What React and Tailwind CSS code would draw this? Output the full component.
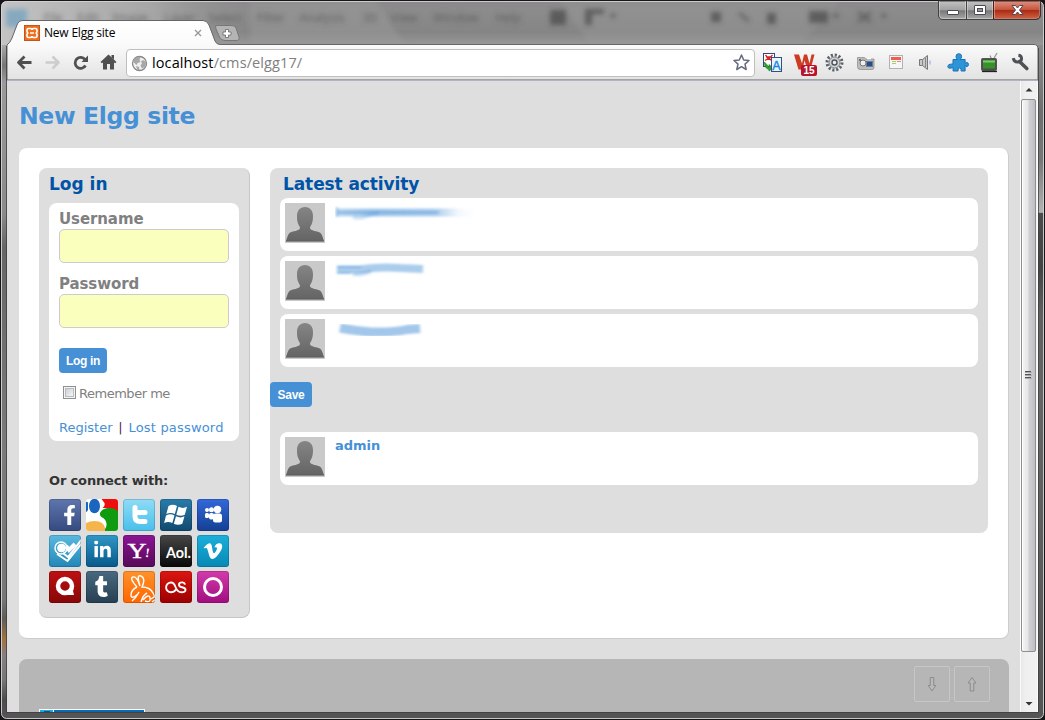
import React from "react";
import { FaFacebookF, FaLinkedinIn, FaVimeoV, FaTumblr } from "react-icons/fa";

/* An svg whose viewBox is given in window coordinates. */
function Art({ x, y, w, h, children, className = "" }) {
  return (
    <svg width={w} height={h} viewBox={`${x} ${y} ${w} ${h}`} className={`block shrink-0 ${className}`}>
      {children}
    </svg>
  );
}

const menuItems = [
  ["File", 53], ["Edit", 88], ["Image", 130], ["Layer", 180], ["Select", 225], ["Filter", 271],
  ["Analysis", 322], ["3D", 370], ["View", 404], ["Window", 456], ["Help", 508],
];

function Backdrop() {
  return (
    <svg width="1045" height="720" viewBox="0 0 1045 720" className="absolute left-0 top-0">
      <defs>
        <filter id="soft" x="-20%" y="-50%" width="140%" height="200%"><feGaussianBlur stdDeviation="2.4" /></filter>
        <linearGradient id="top" x1="0" y1="0" x2="0" y2="1">
          <stop offset="0" stopColor="#8b888b" /><stop offset="0.2" stopColor="#8c8c8c" />
          <stop offset="0.7" stopColor="#858585" /><stop offset="1" stopColor="#999" />
        </linearGradient>
        <linearGradient id="topLeft" x1="0" y1="0" x2="1" y2="0">
          <stop offset="0" stopColor="#c4c4c4" /><stop offset="0.6" stopColor="#b0b0b0" stopOpacity="0.75" />
          <stop offset="1" stopColor="#999" stopOpacity="0" />
        </linearGradient>
        <linearGradient id="left" x1="0" y1="45" x2="0" y2="720" gradientUnits="userSpaceOnUse">
          <stop offset="0" stopColor="#aaa" /><stop offset="0.03" stopColor="#777" />
          <stop offset="0.055" stopColor="#9a9a9a" /><stop offset="0.25" stopColor="#8a8a8a" />
          <stop offset="0.3" stopColor="#666" /><stop offset="0.6" stopColor="#7b7b7b" />
          <stop offset="0.82" stopColor="#777" /><stop offset="0.85" stopColor="#605c58" />
          <stop offset="0.88" stopColor="#a07340" /><stop offset="0.905" stopColor="#858080" />
          <stop offset="0.94" stopColor="#777" /><stop offset="0.97" stopColor="#4c4c4c" />
          <stop offset="1" stopColor="#555" />
        </linearGradient>
        <linearGradient id="right" x1="0" y1="45" x2="0" y2="720" gradientUnits="userSpaceOnUse">
          <stop offset="0" stopColor="#8b8b8b" /><stop offset="0.1" stopColor="#6f706e" />
          <stop offset="0.17" stopColor="#777" /><stop offset="0.248" stopColor="#b3b3b3" />
          <stop offset="0.249" stopColor="#4c4c4c" /><stop offset="0.33" stopColor="#444" />
          <stop offset="0.4" stopColor="#606060" /><stop offset="0.52" stopColor="#666" />
          <stop offset="1" stopColor="#555" />
        </linearGradient>
      </defs>
      <rect width="1045" height="720" fill="#555" />
      <rect width="1045" height="46" fill="url(#top)" />
      <rect width="250" height="46" fill="url(#topLeft)" />
      <path d="M250 0H375L405 45H250Z" fill="#9a9a9a" opacity=".5" filter="url(#soft)" />
      <path d="M560 0H840L800 45H590Z" fill="#999" opacity=".4" filter="url(#soft)" />
      <rect x="0" y="45" width="8" height="675" fill="url(#left)" />
      <rect x="1037" y="45" width="8" height="675" fill="url(#right)" />
      <g filter="url(#soft)">
        <rect x="6" y="9" width="21" height="18" fill="#86a9c0" />
        <g fontFamily="Noto Sans, sans-serif" fontSize="12" fill="#4d4d4d" fillOpacity=".7" textAnchor="middle">
          {menuItems.map(([t, cx]) => <text key={t} x={cx} y="22">{t}</text>)}
        </g>
        <g fill="#3f3f3f" opacity=".6">
          <rect x="550" y="10" width="16" height="15" />
          <path d="M585 9h19v5h-12v11h-7zM609 14h8l-4 5zM711 12h10v10h-10zM767 13h9v11h-9zM809 11h19v12h-19zM832 14h8l-4 5zM880 14h7l-3 5z" />
          <path d="M739 13l10 8M858 22l13-10M858 12l13 10" stroke="#444" strokeWidth="3" />
        </g>
      </g>
    </svg>
  );
}

function WindowEdge() {
  return (
    <svg width="1045" height="720" viewBox="0 0 1045 720" className="pointer-events-none absolute left-0 top-0">
      <path d="M0 0H1045V720H0ZM6 1.5Q1.5 1.5 1.5 6V713Q1.5 718.500 6 718.500H1039Q1043.500 718.500 1043.500 713V6Q1043.500 1.500 1039 1.500Z" fill="#18141a" fillRule="evenodd" />
      <rect x="1.5" y="1.500" width="1042" height="717" rx="5" fill="none" stroke="#e3e3e3" strokeOpacity=".85" />
      <path d="M6.500 46V712.500H1038.500V48" fill="none" stroke="#3c3c3c" strokeOpacity=".75" />
    </svg>
  );
}

function TabStrip() {
  return (
    <svg width="1045" height="81" viewBox="0 0 1045 81" className="absolute left-0 top-0">
      <defs>
        <linearGradient id="bar" x1="0" y1="20" x2="0" y2="80" gradientUnits="userSpaceOnUse">
          <stop offset="0" stopColor="#fff" /><stop offset="0.42" stopColor="#fafafa" /><stop offset="1" stopColor="#e2e2e3" />
        </linearGradient>
      </defs>
      <path d="M7 80V45Q10 43 12 38L17 25Q18.500 20.500 23 20.500H203Q207 20.500 209 25L215 41Q216.500 44.500 220 44.500H1034Q1038 44.500 1038 49V80Z" fill="url(#bar)" stroke="#666" />
      <path d="M215.500 25.500H232Q235 25.500 236 28L239 37Q240 40.500 236 40.500H225Q221 40.500 219.500 37L216 29Z" fill="#b4b4b4" stroke="#777" />
      <path d="M225.500 29.500h3v2.500h2.500v3h-2.500v2.500h-3V35H223v-3h2.500z" fill="#fff" stroke="#666" strokeWidth=".8" />
      <path d="M7 80.500H1038" stroke="#b1b3c2" />
    </svg>
  );
}

function Tab() {
  return (
    <div className="relative flex h-[45px] items-center pl-[24px] pt-[21px]">
      <Art x={24} y={25} w={16} h={16}>
        <rect x="24.500" y="25.500" width="15" height="15" fill="#ef6f1d" stroke="#bd571e" />
        <path d="M28.500 28.500h2q1.500 0 1.500 1.500 0-1.500 1.500-1.500h2q1.500 0 1.500 1.500v1.500q0 1.500-1.500 1.500 1.500 0 1.500 1.500V36q0 1.500-1.500 1.500h-2Q32 37.500 32 36q0 1.500-1.500 1.500h-2Q27 37.500 27 36v-1.500q0-1.500 1.500-1.500-1.500 0-1.500-1.500V30q0-1.500 1.500-1.500z" fill="none" stroke="#fff" strokeWidth="1.600" />
        <path d="M30 33h4" stroke="#fff" strokeWidth="1.500" />
      </Art>
      <span className="ml-[4px] w-[146px] whitespace-nowrap font-['Open_Sans',sans-serif] text-[12px] leading-4 tracking-[-0.2px] text-black">New Elgg site</span>
      <Art x={190} y={25} w={16} h={16}><path d="M195 30l6 6m0-6l-6 6" stroke="#999" strokeWidth="1.400" /></Art>
    </div>
  );
}

function WindowButtons() {
  return (
    <svg width="106" height="22" viewBox="937 0 106 22" className="absolute left-[937px] top-0">
      <defs>
        <linearGradient id="wb" x1="0" y1="0" x2="0" y2="1">
          <stop offset="0" stopColor="#c2c2c2" /><stop offset=".5" stopColor="#a0a0a0" />
          <stop offset=".52" stopColor="#777" /><stop offset="1" stopColor="#aaa" />
        </linearGradient>
        <linearGradient id="wc" x1="0" y1="0" x2="0" y2="1">
          <stop offset="0" stopColor="#dc9484" /><stop offset=".5" stopColor="#c7503a" />
          <stop offset=".52" stopColor="#a92c12" /><stop offset="1" stopColor="#d26345" />
        </linearGradient>
      </defs>
      <path d="M938.500 1V15Q938.500 19.500 943 19.500H1036Q1040.500 19.500 1040.500 15V1Z" fill="url(#wb)" stroke="#414141" />
      <path d="M993.500 1V19H1036Q1040 19 1040 15V1Z" fill="url(#wc)" stroke="#4c1d16" />
      <path d="M966.500 1V19" stroke="#444" />
      <path d="M939.500 1V15Q939.500 18.500 943 18.500H965.500V1M967.500 1V18.500H992.500V1M994.500 1V18.500H1036Q1039.500 18.500 1039.500 15V1" stroke="#fff" strokeOpacity=".35" fill="none" />
      <rect x="947.500" y="10.500" width="11" height="4" rx=".5" fill="#fff" stroke="#4a4a56" />
      <rect x="974.500" y="5.500" width="11" height="9" rx=".5" fill="#fff" stroke="#4a4a56" />
      <rect x="977.500" y="8.500" width="5" height="3" fill="#999" stroke="#4a4a56" />
      <path d="M1012 5.500h3.500l2 2.500 2-2.500h3.500l-3.500 4.500 3.500 4.500h-3.500l-2-2.500-2 2.500h-3.500l3.500-4.500z" fill="#fff" stroke="#4e4a55" />
    </svg>
  );
}

const extensionArt = [
  /* translator */
  <g>
    <rect x="763.500" y="53.500" width="11" height="13" fill="#fff" stroke="#2d4a7c" />
    <path d="M765.500 55l3 4 4-4M765 60.500l4-2.500 3 3M766 57h6" stroke="#d22" strokeWidth="1.300" fill="none" />
    <path d="M764.500 62l4.500 5v-2.500l4 3.500-4 3v-1.500q-5-1.500-4.500-7.500z" fill="#2da52d" stroke="#14701c" strokeWidth=".6" />
    <rect x="771.500" y="57.500" width="10" height="14" fill="#e9f4ff" stroke="#31517f" />
    <text x="776.500" y="69.500" fontSize="12.500" fontFamily="Liberation Sans, sans-serif" fill="#1785e0" stroke="#1785e0" strokeWidth=".4" textAnchor="middle">A</text>
  </g>,
  /* mail counter */
  <g>
    <path d="M794 54.500h5l3 9 2-9h3l2.500 9 2-9h3l-4 15h-3l-3-9-2 9h-4z" fill="#cc3b22" />
    <rect x="801" y="65" width="16" height="11" rx="2" fill="#b9132c" />
    <text x="809" y="74.200" fontSize="10" fontWeight="700" fontFamily="Liberation Sans, sans-serif" fill="#fff" textAnchor="middle">15</text>
  </g>,
  /* gear */
  <g>
    <circle cx="834.500" cy="62.500" r="7.500" fill="none" stroke="#5c6168" strokeWidth="3" strokeDasharray="2.100 1.827" />
    <circle cx="834.500" cy="62.500" r="5.500" fill="#d0d2d5" stroke="#777c83" />
    <circle cx="834.500" cy="62.500" r="2.500" fill="#eee" stroke="#50555d" strokeWidth="1.400" />
  </g>,
  /* camera */
  <g>
    <path d="M857.500 57.500h7l1 1.500h8.500v8.500q0 2-2 2h-12q-2.500 0-2.500-3v-6z" fill="#bcbcbc" stroke="#909090" strokeWidth=".8" />
    <circle cx="863" cy="63" r="3" fill="#eee" stroke="#777" />
    <circle cx="860" cy="60" r="1" fill="#555" />
    <rect x="866.500" y="61.500" width="6" height="5" fill="#254f87" stroke="#6c7c91" />
    <path d="M867 58.500h4" stroke="#fff" strokeWidth="1.500" />
  </g>,
  /* note page */
  <g>
    <rect x="889.500" y="55.500" width="13" height="13" fill="#f6f6f6" stroke="#b2b2b2" />
    <path d="M891 58.500h10" stroke="#f25b52" strokeWidth="3" />
    <path d="M892 61.500h4M892 63.500h4" stroke="#a6d16d" strokeWidth="1" />
    <path d="M897 61.500h4" stroke="#df8c88" />
  </g>,
  /* speaker */
  <g>
    <path d="M919.500 59.500h3l5-4v14l-5-4h-3z" fill="#c8c8c8" stroke="#777" />
    <path d="M922.500 59v7M925.500 58v9" stroke="#888" />
    <path d="M930 60.500v4" fill="none" stroke="#8ba4d5" />
  </g>,
  /* puzzle piece */
  <path d="M954.500 59.500h4.500q-1.500-1.300-1.500-3 0-2.800 2.800-2.800t2.800 2.800q0 1.700-1.500 3h5v4q1-1.200 2-1 1.400.300 1.400 2t-1.400 2-2-1v5.500h-4q.7-3-1.500-3t-1.500 3h-5v-3.500q-4.800 1.800-5.300-.8-.2-2.700 5.200-2.700z" fill="#2e94d8" stroke="#1a72b0" transform="translate(-1.500 0)" />,
  /* television */
  <g>
    <path d="M992 60l-2-4.500M993 60l4-7" stroke="#8b9a86" strokeWidth="1.200" />
    <rect x="981.500" y="58.500" width="15" height="12" rx="1" fill="#4b4f48" stroke="#555" />
    <rect x="983" y="60" width="12" height="8.500" fill="#37902c" />
    <path d="M983 61.500h12" stroke="#7bc96c" strokeWidth="2" />
    <path d="M982 71.500h15" stroke="#222" strokeWidth="1.300" />
  </g>,
  /* wrench */
  <g fill="none" stroke="#4f5255">
    <path d="M1019.500 61.500l7.300 7" strokeWidth="3.600" strokeLinecap="round" />
    <path d="M1013.200 58.200q1 4.300 5 3.800t3.200-4.500q-.5-2-3-2.300" strokeWidth="3" />
  </g>,
];

function Toolbar() {
  return (
    <div className="relative flex h-[36px] items-center pl-[11px]">
      <Art x={11} y={45} w={28} h={36}>
        <path d="M18.500 62.500H31.500M24.500 56.500l-6 6 6 6" stroke="#505050" strokeWidth="2.800" fill="none" strokeLinejoin="round" />
      </Art>
      <Art x={39} y={45} w={28} h={36}>
        <path d="M45.500 62.500H58.500M52.500 56.500l6 6-6 6" stroke="#cdcdcd" strokeWidth="2.600" fill="none" strokeLinejoin="round" />
      </Art>
      <Art x={67} y={45} w={28} h={36}>
        <path d="M85.500 65.500a5.500 5.500 0 1 1-.5-6" stroke="#505050" strokeWidth="2.800" fill="none" />
        <path d="M88 55.500v6.500h-6.500z" fill="#505050" />
      </Art>
      <Art x={95} y={45} w={28} h={36}>
        <path d="M108.500 54.500l8 7.500-1.300 1.300-1.200-.8v7h-4v-5.500h-3v5.500h-4v-7l-1.200.8-1.300-1.300z" fill="#505050" />
        <path d="M111.500 55h2.500v4.500l-2.500-2z" fill="#505050" />
      </Art>
      <div className="ml-[3px] flex h-[28px] w-[629px] items-center rounded-[4px] border border-[#bfbfbf] bg-white pl-[4px]">
        <Art x={131} y={54} w={17} h={17}>
          <circle cx="139.500" cy="62.500" r="7" fill="#eee" stroke="#888" strokeWidth="1.300" />
          <path d="M134 58q4-3 6.500-2l-1 3 1 2-3 1-1 2-3-3zM143 59l3 2-.5 4.500-3.500 2-1.500-3 1.500-2-1-2zM136 65l3 1 .5 3h-2z" fill="#a7a7a7" />
        </Art>
        <div className="ml-[4px] flex-1 whitespace-nowrap font-['Open_Sans',sans-serif] text-[14.5px] leading-5 tracking-[0.1px] text-[#808080]"><span className="text-black">localhost</span>/cms/elgg17/</div>
        <Art x={731} y={53} w={20} h={20} className="mr-[3px]">
          <path d="M741.500 55l2.200 5 5.300.5-4 3.600 1.200 5.400-4.700-2.800-4.700 2.800 1.200-5.400-4-3.600 5.300-.5z" fill="#fff" stroke="#626a80" strokeWidth="1.500" strokeLinejoin="round" />
        </Art>
      </div>
      <div className="ml-[3px] flex">
        {extensionArt.map((a, i) => <Art key={i} x={758 + 31 * i} y={45} w={31} h={36}>{a}</Art>)}
      </div>
    </div>
  );
}

function Scrollbar() {
  return (
    <Art x={1020} y={81} w={18} h={631}>
      <defs>
        <linearGradient id="thumb"><stop offset="0" stopColor="#f7f7f7" /><stop offset=".45" stopColor="#e6e6e8" /><stop offset=".55" stopColor="#d0d0d4" /><stop offset="1" stopColor="#bcbcc4" /></linearGradient>
        <linearGradient id="track"><stop offset="0" stopColor="#e6e6e6" /><stop offset=".3" stopColor="#efefef" /><stop offset="1" stopColor="#f2f2f2" /></linearGradient>
      </defs>
      <rect x="1020" y="81" width="18" height="631" fill="url(#track)" />
      <path d="M1020.500 81v631M1037.500 81v631" stroke="#fbfbfb" />
      <path d="M1025.500 91.500l3.500-3.500 3.500 3.500z" fill="#333" /><path d="M1025.500 702l3.500 3.500 3.500-3.500z" fill="#333" />
      <rect x="1021.500" y="99.500" width="14" height="552" rx="1.500" fill="url(#thumb)" stroke="#8f8f8f" />
      <path d="M1022.500 101v549" stroke="#fff" />
      <path d="M1025 371.500h6M1025 374.500h6M1025 377.500h6" stroke="#555" />
      <path d="M1025 372.500h7M1025 375.500h7M1025 378.500h7" stroke="#aaa" />
    </Art>
  );
}

function Field({ label }) {
  return (
    <label className="block h-[65px]">
      <span className="block h-[16px] whitespace-nowrap text-[15px] font-bold leading-[13px] tracking-[-0.1px] text-[#808080]">{label}</span>
      <span className="block h-[34px] rounded-[5px] border border-[#ccc] bg-[#faffbd]" />
    </label>
  );
}

function Button({ children, className }) {
  return (
    <button className={`block h-[25px] rounded-[4px] bg-[#4690d6] text-center font-['Liberation_Sans',sans-serif] text-[12px] font-bold leading-[26px] tracking-[-0.3px] text-white ${className}`}>
      {children}
    </button>
  );
}

function Avatar() {
  return (
    <svg width="40" height="40" viewBox="0 0 40 40" className="block shrink-0">
      <defs><linearGradient id="man" x1="0" y1="0" x2="0" y2="1"><stop offset="0" stopColor="#858585" /><stop offset="1" stopColor="#646464" /></linearGradient></defs>
      <rect width="40" height="40" fill="#c9c9c9" />
      <path d="M20 4c5 0 8 3.500 8 9 0 4-.5 6-1.500 8.500-.7 1.700-1.500 2-1.500 3.500 0 3 8 3 10.500 5 1.700 1.500 2.500 5 3.500 8H1c1-3 1.800-6.500 3.500-8C7 28 15 28 15 25c0-1.500-1-2-1.500-3.500C12.300 19 12 17 12 13c0-5.500 3-9 8-9z" fill="url(#man)" />
      <path d="M1 38.200h38" stroke="#555" strokeWidth=".8" />
    </svg>
  );
}

const smudges = [
  <g>
    <path d="M1 8.500H114L138 9" stroke="url(#fade)" strokeWidth="8" />
    <path d="M18 13q8 2 14-1t12-3" stroke="#4690d6" strokeWidth="4" strokeOpacity=".25" />
    <path d="M2 3v10M2 8.500H104" stroke="#4690d6" strokeWidth="1.500" strokeOpacity=".6" />
  </g>,
  <g>
    <path d="M2 7.500H24Q44 4.500 66 6L88 7" stroke="#4690d6" strokeWidth="8" strokeOpacity=".45" />
    <path d="M18 12q10 1 18-3" stroke="#4690d6" strokeWidth="4" strokeOpacity=".3" />
    <path d="M2 5h24M2 11h14" stroke="#4690d6" strokeWidth="1.300" strokeOpacity=".5" />
  </g>,
  <path d="M5 8Q22 11 36 12Q60 12.500 72 9.500L85 8.500" stroke="#4690d6" strokeWidth="9" strokeOpacity=".5" />,
];

function Row({ smudge, children, className = "" }) {
  return (
    <div className={`flex h-[53px] rounded-[8px] bg-white p-[5px] ${className}`}>
      <Avatar />
      <div className="ml-[10px] pt-[1px] text-[13px] font-bold leading-[15px] text-[#4690d6]">
        {children}
        {smudge && <svg width="150" height="20" viewBox="0 0 150 20" fill="none" className="block"><g filter="url(#smear)">{smudge}</g></svg>}
      </div>
    </div>
  );
}

const social = [
  ["#5e76ae", "#354a7f", <FaFacebookF x="10.500" y="6" size={20} />],
  ["#fff", "#fff", <g>
    <path d="M15.500 0H32V13L25 10Q20 8.500 16.500 9Q19.500 6.500 18.500 4Z" fill="#f00d0d" />
    <path d="M14 14Q16 9.500 22 9T32 12V32H17Q21 29 20.500 24.500T15.500 18Q13.500 16.500 14 14Z" fill="#0e9b10" />
    <ellipse cx="8.500" cy="7" rx="5.500" ry="7.300" fill="#1965c0" />
    <path d="M0 3Q1.500 2 2 4V11Q1 13 0 13Z" fill="#1965c0" />
    <path d="M0 24Q6 21 13 22.500Q20 25 19 32H0Z" fill="#f6b54a" />
  </g>],
  ["#90dbf6", "#48c0ec", <path d="M12 8.500v9q0 5 5 5h5M12 13.500h10" fill="none" stroke="#fff" strokeWidth="5" strokeLinecap="round" strokeLinejoin="round" />],
  ["#297ba9", "#11496f", <path d="M8.500 7q4.500-2.300 8.500 0l-2.200 8q-4.300-2-8.500 0zM18.500 7.800q4.500 2.200 8.500 0l-2.200 8q-4.300 2-8.500 0zM6 16.500q4.500-2.300 8.500 0l-2.200 7.500q-4-2-8.200 0zM16 17.300q4.500 2.200 8.500 0l-2.200 7.500q-4.300 2-8.500 0z" />],
  ["#3268d9", "#153f93", <g><circle cx="10" cy="11" r="2" /><circle cx="14.500" cy="10.800" r="2.500" /><circle cx="20.500" cy="10.500" r="3.700" /><rect x="8" y="14" width="4" height="5" rx="1.500" /><rect x="12" y="14" width="5" height="6.500" rx="2" /><rect x="16" y="14.500" width="9" height="9" rx="2.500" /></g>],
  ["#5ab9df", "#2287b8", <g fill="none" stroke="#fff"><circle cx="12" cy="13" r="6" strokeWidth="1.500" /><circle cx="12.500" cy="13" r="3.900" fill="#fff" /><path d="M8 19l10.500 7L33 8M14 18l5 4L33 4" strokeWidth="2" /><path d="M17 11l3 4 6-6" strokeWidth="4" /></g>],
  ["#2f97c5", "#07598a", <FaLinkedinIn x="7" y="5.500" size={19} />],
  ["#8b1494", "#570959", <g><text x="4.500" y="23" fontFamily="Liberation Serif, serif" fontSize="21" stroke="#fff" strokeWidth=".4" textLength="19" lengthAdjust="spacingAndGlyphs">Y</text><text x="22" y="22" fontFamily="Liberation Serif, serif" fontSize="13" fontWeight="700" transform="rotate(8 24 20)">!</text></g>],
  ["#474747", "#080808", <text x="6" y="22.500" fontFamily="Lato, sans-serif" fontSize="15.500" fontWeight="700" textLength="25" lengthAdjust="spacingAndGlyphs">Aol.</text>],
  ["#1cafda", "#0789b5", <FaVimeoV x="5.500" y="5.500" size={21} />],
  ["#bd1113", "#870707", <g><circle cx="16" cy="15" r="7" fill="none" stroke="#fff" strokeWidth="4.500" /><path d="M17 20h7l1 4h-8z" /></g>],
  ["#486980", "#273f52", <FaTumblr x="5" y="5" size={21} />],
  ["#ff922b", "#ff6500", <g fill="none" stroke="#fff" strokeWidth="1.400"><path d="M14 16Q6 7 10 6t7 9Q13 3 18 5t1 11q8 0 11 6t5 8" /><path d="M14 16q-6 3-6 8t7-1M16 21q-3 6-7 9M24 22q-4 2-6 9M20 29q6-7 7-2t-5 3M28 28l6-4M29 31l4-3" /></g>],
  ["#dc1610", "#9c0000", <g fill="none" stroke="#fff" strokeWidth="1.900"><path d="M16 18.500Q14 21.300 11 21.300a4.800 4.800 0 1 1 0-9.800q3 0 4.500 4.500 2 5.300 6 5.300 4 0 4-2.500 0-2-3.500-2.600-3-.5-3-2.500 0-2.300 3-2.300 2.500 0 3 2.200" /></g>],
  ["#d13baa", "#a20c7e", <circle cx="16" cy="16" r="8.500" fill="none" stroke="#fff" strokeWidth="3" />],
];

function SocialGrid() {
  return (
    <div className="grid w-[180px] grid-cols-5 gap-x-[5px] gap-y-[4px]">
      {social.map(([a, b, art], i) => (
        <svg key={i} width="32" height="32" viewBox="0 0 32 32" className="block overflow-hidden rounded-[3px]">
          <defs><linearGradient id={`s${i}`} x1="0" y1="0" x2="0" y2="1"><stop offset="0" stopColor={a} /><stop offset="1" stopColor={b} /></linearGradient></defs>
          <rect width="32" height="32" fill={`url(#s${i})`} />
          <g fill="#fff" color="#fff">{art}</g>
          {i !== 1 && <rect x=".5" y=".5" width="31" height="31" rx="2.500" fill="none" stroke="#000" strokeOpacity=".15" />}
        </svg>
      ))}
    </div>
  );
}

function Sidebar() {
  return (
    <aside className="h-[450px] w-[211px] shrink-0 rounded-[8px] border-b border-r border-[#c6c6c6] bg-[#dedede] pl-[10px]">
      <h2 className="h-[35px] pt-[6px] text-[17px] font-bold leading-[20px] text-[#0054a7]">Log in</h2>
      <div className="h-[238px] w-[190px] rounded-[8px] bg-white px-[10px] pt-[10px]">
        <Field label="Username" />
        <Field label="Password" />
        <Button className="mt-[5px] w-[48px]">Log in</Button>
        <div className="flex h-[34px] items-center pl-[4px] pt-[8px] text-[13px] text-[#808080]">
          <span className="mb-[3px] mr-[3px] flex h-[13px] w-[13px] shrink-0 border border-[#8e8f8f] bg-[#f4f4f4] p-px"><span className="flex-1 border border-[#b8bbc0] bg-linear-to-br from-[#cbcfd5] to-[#f6f6f6]" /></span>
          <span className="whitespace-nowrap leading-4 tracking-[-0.48px]">Remember me</span>
        </div>
        <div className="mt-[5px] flex whitespace-nowrap pt-[8px] text-[13px] leading-4 text-[#4690d6]">
          <a>Register</a><span className="w-[16px] text-center text-[#5d1a5b]">|</span><a className="tracking-[0.18px]">Lost password</a>
        </div>
      </div>
      <h3 className="mb-[10px] mt-[32px] whitespace-nowrap text-[13px] font-bold leading-[16px] tracking-[-0.15px] text-[#333]">Or connect with:</h3>
      <SocialGrid />
    </aside>
  );
}

function Main() {
  return (
    <main className="h-[365px] w-[718px] rounded-[8px] bg-[#dedede]">
      <h2 className="h-[30px] pl-[13px] pt-[6px] text-[17px] font-bold leading-[20px] tracking-[-0.1px] text-[#0054a7]">Latest activity</h2>
      <div className="flex flex-col gap-[5px] px-[10px]">
        {smudges.map((s, i) => <Row key={i} smudge={s} />)}
      </div>
      <Button className="mt-[15px] w-[42px]">Save</Button>
      <Row className="mx-[10px] mt-[25px]">admin</Row>
    </main>
  );
}

function Footer() {
  return (
    <footer className="mt-[20px] flex h-[53px] w-[990px] flex-col justify-between overflow-hidden rounded-t-[8px] bg-[#b6b6b6]">
      <div className="flex justify-end gap-[4px] pr-[19px] pt-[7px]">
        {["M18 25l-5.500-5.500h3V11.500h5v8h3z", "M18 11.500l-5.500 5.500h3v8h5v-8h3z"].map((d, i) => (
          <div key={i} className="flex h-[36px] w-[36px] items-center justify-center rounded-[2px] border border-[#c7c7c7]">
            <svg width="36" height="36" viewBox="0 0 36 36" className="shrink-0"><g transform="translate(5.400 0) scale(.7 1)"><path d={d} fill="#b9b9b9" stroke="#858585" /></g></svg>
          </div>
        ))}
      </div>
      <div className="ml-[20px] flex h-[3px] w-[106px] shrink-0 gap-px border border-b-0 border-white bg-white">
        <span className="flex w-[13px] justify-center bg-[#0aaef0]"><span className="mt-px h-px w-[6px] bg-[#175679]" /></span><span className="flex-1 bg-[#0869b8]" />
      </div>
    </footer>
  );
}

export default function App() {
  return (
    <div className="relative h-[720px] w-[1045px] overflow-hidden font-['DejaVu_Sans',sans-serif]">
      <Backdrop />
      <TabStrip />
      <svg width="0" height="0" className="absolute">
        <filter id="smear" x="-10%" y="-80%" width="120%" height="260%"><feGaussianBlur stdDeviation="1.500 .9" /></filter>
        <linearGradient id="fade" x1="0" y1="0" x2="138" y2="0" gradientUnits="userSpaceOnUse">
          <stop offset="0" stopColor="#4690d6" stopOpacity=".35" /><stop offset=".25" stopColor="#4690d6" stopOpacity=".5" />
          <stop offset=".72" stopColor="#4690d6" stopOpacity=".45" /><stop offset=".9" stopColor="#4690d6" stopOpacity=".06" />
          <stop offset="1" stopColor="#4690d6" stopOpacity="0" />
        </linearGradient>
      </svg>
      <Tab />
      <Toolbar />
      <div className="relative ml-[7px] flex h-[631px] w-[1031px] overflow-hidden bg-[#dedede]">
        <div className="w-[1013px] pl-[12px]">
          <h1 className="h-[67px] whitespace-nowrap pt-[20px] text-[23.5px] font-bold leading-[30px] tracking-[-0.35px] text-[#4690d6]">New Elgg site</h1>
          <div className="flex h-[491px] w-[990px] items-start gap-[20px] rounded-[8px] border-b border-r border-[#ccc] bg-white pl-[20px] pt-[20px]">
            <Sidebar />
            <Main />
          </div>
          <Footer />
        </div>
        <Scrollbar />
      </div>
      <WindowEdge />
      <WindowButtons />
    </div>
  );
}
